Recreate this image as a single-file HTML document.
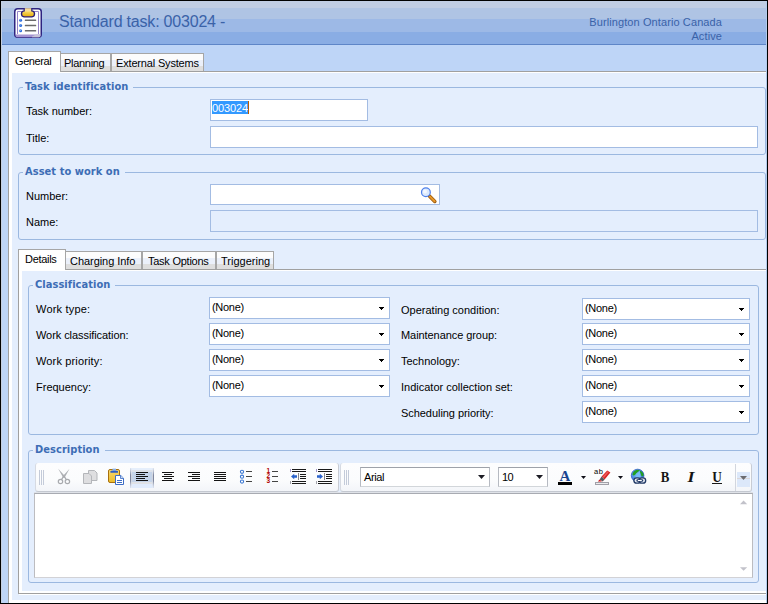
<!DOCTYPE html>
<html>
<head>
<meta charset="utf-8">
<title>Standard task: 003024</title>
<style>
html,body{margin:0;padding:0;}
body{width:768px;height:604px;overflow:hidden;position:relative;background:#bed5f7;font-family:"Liberation Sans",sans-serif;font-size:11px;color:#000;}
.abs,#root *{position:absolute;box-sizing:border-box;}
#root{position:absolute;left:0;top:0;width:768px;height:604px;overflow:hidden;}
.t{white-space:nowrap;line-height:13px;height:13px;}
/* header */
#hdr{left:0;top:0;width:768px;height:45px;background:linear-gradient(to bottom,#c0cde3 0,#c0cde3 8px,#afc4e4 8px,#afc4e4 19px,#9db9e6 19px,#9db9e6 32px,#8aade4 32px,#8aade4 44px,#5e86c8 44px,#5e86c8 45px);}
#title{left:59px;top:12px;font-size:16px;line-height:20px;height:20px;color:#3a62a8;letter-spacing:-0.2px;white-space:nowrap;}
.hr{right:46px;color:#3a62a8;text-align:right;}
/* frame */
#bt{left:0;top:0;width:768px;height:1px;background:#000;}
#bb{left:0;top:603px;width:768px;height:1px;background:#000;}
#bl{left:0;top:0;width:1px;height:604px;background:#000;}
#br{left:767px;top:0;width:1px;height:604px;background:#000;}
#bl2{left:1px;top:1px;width:1px;height:602px;background:#c5cfe0;}
#br2{left:766px;top:1px;width:1px;height:602px;background:#b4cbed;}
/* panels */
.panel{background:#fff;border:1px solid #a0a0a0;}
.panel>div{left:3px;top:1px;right:0;bottom:2px;background:#e4eefd;}
.tab{border:1px solid #a6a6a6;border-bottom:none;background:linear-gradient(to bottom,#fcfcfc 0,#fcfcfc 6px,#ebf0fa 6px,#ebf0fa 12px,#dedede 12px,#dedede 100%);}
.tab.on{background:#fff;}

fieldset,.fs{border:1px solid #9bb8e0;border-radius:3px;}
.lg{color:#3d6db5;font-family:"DejaVu Sans Condensed","Liberation Sans",sans-serif;font-weight:bold;background:#e4eefd;padding:0 5px 0 2px;letter-spacing:0.05px;}
.tb{background:linear-gradient(to bottom,#fdfdfe 0,#fbfcfd 60%,#f3f5f9 100%);border-radius:3px;border-bottom:1px solid #c4c8d0;border-left:1px solid #d6dae2;border-right:1px solid #c8ccd4;}
.dd{background:#fff;border:1px solid #b6bac2;border-top-color:#9ea2aa;border-bottom-color:#d2d6da;}
.in{border:1px solid #a3bce3;background:#fff;}
.in.dis{background:#e4eefd;}
.sel .t{left:2px;top:3px;letter-spacing:-0.3px;}
.sel i{right:5px;top:9px;width:5px;height:1px;background:#000;}
.sel i::before,.sel i::after{content:"";position:absolute;background:#000;height:1px;}
.sel i::before{left:1px;top:1px;width:3px;}
.sel i::after{left:2px;top:2px;width:1px;}
</style>
</head>
<body>
<div id="root">
<div id="hdr"></div>
<div id="title">Standard task: 003024 -</div>
<div class="t hr" style="top:16px;letter-spacing:0.1px">Burlington Ontario Canada</div>
<div class="t hr" style="top:30px;letter-spacing:0.1px">Active</div>

<!-- outer tab panel -->
<div class="panel" style="left:8px;top:71px;width:780px;height:533px"><div style="bottom:3px"></div></div>
<div class="tab on" style="left:8px;top:51px;width:53px;height:21px"><span class="t" style="left:6px;top:3px;letter-spacing:-0.4px">General</span></div>
<div class="tab" style="left:60px;top:53px;width:51px;height:18px"><span class="t" style="left:3px;top:3px;letter-spacing:-0.3px">Planning</span></div>
<div class="tab" style="left:111px;top:53px;width:93px;height:18px"><span class="t" style="left:4px;top:3px;letter-spacing:-0.17px">External Systems</span></div>

<!-- Task identification -->
<div class="fs" style="left:18px;top:87px;width:748px;height:68px"></div>
<span class="t lg" style="left:23px;top:80px">Task identification</span>
<span class="t" style="left:26px;top:105px">Task number:</span>
<div class="in" style="left:210px;top:99px;width:158px;height:22px"><span class="t" style="left:1px;top:1px;width:36px;height:13px;line-height:15px;background:#3399ff;color:#fff;letter-spacing:-0.1px">003024</span><b style="left:37px;top:1px;width:1px;height:13px;background:#b85c00"></b></div>
<span class="t" style="left:26px;top:132px">Title:</span>
<div class="in" style="left:210px;top:126px;width:548px;height:22px"></div>

<!-- Asset to work on -->
<div class="fs" style="left:18px;top:172px;width:748px;height:68px"></div>
<span class="t lg" style="left:23px;top:165px">Asset to work on</span>
<span class="t" style="left:26px;top:190px">Number:</span>
<div class="in" style="left:210px;top:184px;width:230px;height:21px"></div>
<span class="t" style="left:26px;top:216px">Name:</span>
<div class="in dis" style="left:210px;top:210px;width:548px;height:22px"></div>

<!-- inner tab panel -->
<div class="panel" style="left:18px;top:269px;width:780px;height:325px"><div></div></div>
<div style="left:19px;top:594px;width:760px;height:1px;background:#fff"></div>
<div class="tab on" style="left:18px;top:249px;width:48px;height:21px"><span class="t" style="left:6px;top:3px;letter-spacing:-0.3px">Details</span></div>
<div class="tab" style="left:65px;top:251px;width:77px;height:18px"><span class="t" style="left:4px;top:3px;letter-spacing:-0.05px">Charging Info</span></div>
<div class="tab" style="left:142px;top:251px;width:74px;height:18px"><span class="t" style="left:5px;top:3px;letter-spacing:-0.25px">Task Options</span></div>
<div class="tab" style="left:216px;top:251px;width:58px;height:18px"><span class="t" style="left:4px;top:3px">Triggering</span></div>

<!-- Classification -->
<div class="fs" style="left:28px;top:285px;width:731px;height:150px"></div>
<span class="t lg" style="left:33px;top:278px">Classification</span>
<span class="t" style="left:36px;top:303px;letter-spacing:0.2px">Work type:</span>
<span class="t" style="left:36px;top:329px;letter-spacing:-0.07px">Work classification:</span>
<span class="t" style="left:36px;top:355px;letter-spacing:0.15px">Work priority:</span>
<span class="t" style="left:36px;top:381px">Frequency:</span>
<div class="in sel" style="left:209px;top:297px;width:181px;height:22px"><span class="t">(None)</span><i></i></div>
<div class="in sel" style="left:209px;top:323px;width:181px;height:22px"><span class="t">(None)</span><i></i></div>
<div class="in sel" style="left:209px;top:349px;width:181px;height:22px"><span class="t">(None)</span><i></i></div>
<div class="in sel" style="left:209px;top:375px;width:181px;height:22px"><span class="t">(None)</span><i></i></div>
<span class="t" style="left:401px;top:304px">Operating condition:</span>
<span class="t" style="left:401px;top:329px;letter-spacing:-0.07px">Maintenance group:</span>
<span class="t" style="left:401px;top:355px">Technology:</span>
<span class="t" style="left:401px;top:381px">Indicator collection set:</span>
<span class="t" style="left:401px;top:407px;letter-spacing:-0.05px">Scheduling priority:</span>
<div class="in sel" style="left:582px;top:298px;width:168px;height:22px"><span class="t">(None)</span><i></i></div>
<div class="in sel" style="left:582px;top:323px;width:168px;height:22px"><span class="t">(None)</span><i></i></div>
<div class="in sel" style="left:582px;top:349px;width:168px;height:22px"><span class="t">(None)</span><i></i></div>
<div class="in sel" style="left:582px;top:375px;width:168px;height:22px"><span class="t">(None)</span><i></i></div>
<div class="in sel" style="left:582px;top:401px;width:168px;height:22px"><span class="t">(None)</span><i></i></div>

<!-- Description -->
<div class="fs" style="left:28px;top:450px;width:731px;height:133px"></div>
<span class="t lg" style="left:33px;top:443px">Description</span>
<div style="left:34px;top:492px;width:719px;height:1px;background:#dfe2e8"></div>
<div id="tb1" class="tb" style="left:35px;top:463px;width:304px;height:29px"></div>
<div id="tb2" class="tb" style="left:340px;top:463px;width:412px;height:29px"></div>
<div class="dd" style="left:360px;top:467px;width:130px;height:20px"><span class="t" style="left:3px;top:3px;letter-spacing:-0.4px">Arial</span></div>
<div class="dd" style="left:498px;top:467px;width:50px;height:20px"><span class="t" style="left:3px;top:3px;letter-spacing:-0.6px">10</span></div>
<div id="ed" style="left:34px;top:493px;width:719px;height:85px;background:#fff;border:1px solid #bcbcc0;border-top-color:#a8abb2;border-bottom-color:#d2d2d6"></div>


<!-- icons overlay -->
<svg id="ico" width="768" height="604" viewBox="0 0 768 604" style="left:0;top:0;">
<defs>
<linearGradient id="gclip" x1="0" y1="0" x2="0" y2="1"><stop offset="0" stop-color="#f8d860"/><stop offset="1" stop-color="#e8b010"/></linearGradient>
<linearGradient id="gpaste" x1="0" y1="0" x2="0" y2="1"><stop offset="0" stop-color="#f6d870"/><stop offset="1" stop-color="#eebc28"/></linearGradient>
<linearGradient id="gpress" gradientUnits="userSpaceOnUse" x1="0" y1="468" x2="0" y2="488"><stop offset="0" stop-color="#e6effc"/><stop offset="0.1" stop-color="#e6effc"/><stop offset="0.1" stop-color="#dfe3ea"/><stop offset="0.2" stop-color="#dfe3ea"/><stop offset="0.2" stop-color="#c5d4e9"/><stop offset="0.7" stop-color="#c5d4e9"/><stop offset="0.7" stop-color="#e0e2e6"/><stop offset="0.8" stop-color="#e0e2e6"/><stop offset="0.8" stop-color="#e0ebfc"/><stop offset="1" stop-color="#e0ebfc"/></linearGradient>
<linearGradient id="gedge" x1="0" y1="0" x2="0" y2="1"><stop offset="0" stop-color="#c8ccd8" stop-opacity="0.3"/><stop offset="0.35" stop-color="#8088a0"/><stop offset="0.65" stop-color="#8088a0"/><stop offset="1" stop-color="#c8ccd8" stop-opacity="0.3"/></linearGradient><linearGradient id="gedge2" x1="0" y1="0" x2="0" y2="1"><stop offset="0" stop-color="#e8eef8"/><stop offset="0.4" stop-color="#cfd4de"/><stop offset="0.6" stop-color="#cfd4de"/><stop offset="1" stop-color="#e8eef8"/></linearGradient>
<radialGradient id="gglobe" cx="0.4" cy="0.35" r="0.7"><stop offset="0" stop-color="#7cc4f8"/><stop offset="1" stop-color="#2c62cc"/></radialGradient>
<linearGradient id="ghandle" x1="0" y1="0" x2="1" y2="0"><stop offset="0" stop-color="#a86010"/><stop offset="0.5" stop-color="#f0a030"/><stop offset="1" stop-color="#b06810"/></linearGradient>
</defs>

<!-- header clipboard icon -->
<g id="hicon">
<rect x="14.75" y="8.75" width="26.5" height="28.5" rx="3" ry="3" fill="#fff" stroke="#2e2480" stroke-width="1.500"/>
<path d="M15.500 34.400h25v1a1.800 1.800 0 0 1-1.800 1.800h-21.400a1.800 1.800 0 0 1-1.800-1.800z" fill="#a494d2"/>
<path d="M32 36.500l4-2.100h4.500v1a1.800 1.800 0 0 1-1.800 1.800h-6.700z" fill="#c6c2d6"/>
<path d="M17.500 34v-22.500h21v22.500" fill="none" stroke="#9484c8" stroke-width="1"/>
<path d="M23.600 8.200h8.800v2.400c1.800 0.200 2.800 1.400 2.800 3.200c0 2.200-1.200 3.600-3.200 3.600h-8c-2 0-3.200-1.400-3.200-3.600c0-1.800 1-3 2.800-3.200z" fill="#2a1c78"/>
<rect x="24.800" y="8.200" width="6.400" height="4" fill="#f8dc98"/>
<rect x="22.200" y="11.600" width="11.600" height="4.600" rx="2.200" fill="url(#gclip)"/>
<circle cx="20.600" cy="20.200" r="1.500" fill="#2c6cdc"/><circle cx="20.600" cy="25.400" r="1.500" fill="#2c6cdc"/><circle cx="20.600" cy="30.800" r="1.500" fill="#2c6cdc"/>
<circle cx="20.200" cy="19.800" r="0.600" fill="#9cc4f8"/><circle cx="20.200" cy="25" r="0.600" fill="#9cc4f8"/><circle cx="20.200" cy="30.400" r="0.600" fill="#9cc4f8"/>
<rect x="24.800" y="19.500" width="11.400" height="1.500" rx="0.500" fill="#6a6a6c"/><rect x="24.800" y="24.700" width="11.400" height="1.500" rx="0.500" fill="#6a6a6c"/><rect x="24.800" y="30.100" width="11.400" height="1.500" rx="0.500" fill="#6a6a6c"/>
</g>

<!-- magnifier -->
<g id="mag">
<path d="M429.600 196.200l5.200 5.200" stroke="#9a5a10" stroke-width="3.600" stroke-linecap="round"/>
<path d="M430 196.600l4.600 4.600" stroke="#e89828" stroke-width="2" stroke-linecap="round"/>
<circle cx="425.900" cy="192.200" r="4.400" fill="#dceafe" stroke="#4f80ea" stroke-width="1.200"/>
<circle cx="425" cy="191.400" r="2" fill="#f4f8ff"/>
</g>

<!-- toolbar grips -->
<g fill="#c4cbd9">
<rect x="39" y="470" width="1" height="15"/><rect x="41" y="470" width="1" height="15"/><rect x="43" y="470" width="1" height="15"/>
<rect x="344" y="470" width="1" height="15"/><rect x="346" y="470" width="1" height="15"/><rect x="348" y="470" width="1" height="15"/>
</g>

<!-- scissors (disabled) -->
<g fill="#aeb0b4">
<path d="M58.200 468.800l6.900 7.400-1.700 1.700z"/><path d="M69.600 468.800l-6.900 7.400 1.700 1.700z"/>
</g>
<g fill="none" stroke="#a8aaae" stroke-width="1.200" stroke-linecap="round">
<path d="M63.300 476.800l-1.700 2.600"/><path d="M64.500 476.800l1.700 2.600"/>
<ellipse cx="60.500" cy="481.500" rx="2.200" ry="2.100"/><ellipse cx="67.400" cy="481.500" rx="2.200" ry="2.100"/>
</g>
<!-- copy (disabled) -->
<g fill="#dedee0" stroke="#b4b6ba" stroke-width="1">
<path d="M88.500 470.500h6l2.500 2.500v7.500h-8.500z"/>
<path d="M83.500 473.500h5.500l2.500 2.500v7.500h-8z"/>
</g>
<!-- paste -->
<g>
<rect x="108.500" y="469.500" width="11" height="13" rx="1.500" fill="url(#gpaste)" stroke="#a8700c" stroke-width="1"/>
<rect x="112.500" y="468.600" width="3.500" height="2.400" fill="#8cb4ec"/>
<rect x="110.400" y="470.800" width="7.600" height="2" rx="0.600" fill="#2c5cc0"/>
<path d="M115.500 475.500h5.300l2.700 2.700v6.300h-8z" fill="#fff" stroke="#3c6cc4" stroke-width="1"/>
<path d="M120.500 475.500v3h3" fill="#c8daf4" stroke="#3c6cc4" stroke-width="0.800"/>
<rect x="117" y="480" width="5" height="1" fill="#3c6cc4"/><rect x="117" y="482" width="5" height="1" fill="#3c6cc4"/>
</g>
<!-- pressed align-left -->
<rect x="130" y="468" width="24" height="20" fill="url(#gpress)"/>
<rect x="131" y="468" width="1" height="20" fill="url(#gedge2)"/><rect x="152" y="468" width="1" height="20" fill="url(#gedge2)"/>
<rect x="130" y="468" width="1" height="20" fill="url(#gedge)"/><rect x="153" y="468" width="1" height="20" fill="url(#gedge)"/>
<g fill="#141414">
<!-- left -->
<rect x="136" y="472" width="12" height="1"/><rect x="136" y="474" width="9" height="1"/><rect x="136" y="476" width="12" height="1"/><rect x="136" y="478" width="9" height="1"/><rect x="136" y="480" width="12" height="1"/>
<!-- center -->
<rect x="162" y="472" width="12" height="1"/><rect x="164" y="474" width="8" height="1"/><rect x="162" y="476" width="12" height="1"/><rect x="164" y="478" width="8" height="1"/><rect x="162" y="480" width="12" height="1"/>
<!-- right -->
<rect x="188" y="472" width="12" height="1"/><rect x="192" y="474" width="8" height="1"/><rect x="188" y="476" width="12" height="1"/><rect x="192" y="478" width="8" height="1"/><rect x="188" y="480" width="12" height="1"/>
<!-- justify -->
<rect x="214" y="472" width="12" height="1"/><rect x="214" y="474" width="12" height="1"/><rect x="214" y="476" width="12" height="1"/><rect x="214" y="478" width="12" height="1"/><rect x="214" y="480" width="12" height="1"/>
</g>
<!-- bullets -->
<g fill="#fff" stroke="#3c78d2" stroke-width="1.100">
<circle cx="242" cy="471.800" r="1.600"/><circle cx="242" cy="476.700" r="1.600"/><circle cx="242" cy="481.600" r="1.600"/>
</g>
<g fill="#444">
<rect x="246" y="471" width="6" height="1"/><rect x="246" y="476" width="6" height="1"/><rect x="246" y="481" width="6" height="1"/>
<rect x="272" y="471" width="6" height="1"/><rect x="272" y="476" width="6" height="1"/><rect x="272" y="481" width="6" height="1"/>
</g>
<g font-family="Liberation Sans, sans-serif" font-weight="bold" font-size="6.500px" fill="#b00000">
<text x="266.600" y="473">1</text><text x="266.600" y="478">2</text><text x="266.600" y="483.200">3</text>
</g>
<!-- outdent -->
<g fill="#1a1a1a">
<rect x="292" y="469" width="14" height="1"/><rect x="292" y="471" width="14" height="1"/><rect x="292" y="481" width="14" height="1"/><rect x="292" y="483" width="14" height="1"/>
<rect x="300" y="474" width="6" height="1"/><rect x="300" y="476" width="6" height="1"/><rect x="300" y="478" width="6" height="1"/>
<rect x="318" y="469" width="14" height="1"/><rect x="318" y="471" width="14" height="1"/><rect x="318" y="481" width="14" height="1"/><rect x="318" y="483" width="14" height="1"/>
<rect x="326" y="474" width="6" height="1"/><rect x="326" y="476" width="6" height="1"/><rect x="326" y="478" width="6" height="1"/>
</g>
<rect x="290" y="469" width="1" height="3" fill="#a496cc"/><rect x="290" y="481" width="1" height="3" fill="#a4a4ac"/>
<rect x="316" y="469" width="1" height="3" fill="#a496cc"/><rect x="316" y="481" width="1" height="3" fill="#a4a4ac"/>
<rect x="298" y="473" width="1" height="7" fill="#84848c"/><rect x="324" y="473" width="1" height="7" fill="#84848c"/>
<path d="M291 476.500l3.200-2.800v1.600h2.800v2.400h-2.800v1.600z" fill="#2a62cc"/>
<path d="M323 476.500l-3.200-2.800v1.600h-2.800v2.400h2.800v1.600z" fill="#2a62cc"/>

<path d="M478 475h7l-3.500 4z" fill="#1c1c24"/><path d="M536 475h7l-3.500 4z" fill="#1c1c24"/>
<!-- font colour -->
<text x="559.600" y="480.800" font-family="Liberation Serif, serif" font-weight="bold" font-size="15px" fill="#1a4590">A</text>
<rect x="558" y="482" width="14" height="3" fill="#000"/>
<path d="M581 476h5l-2.500 3z" fill="#101018"/>
<!-- highlight -->
<text x="594" y="474.400" font-family="Liberation Sans, sans-serif" font-size="7.500px" letter-spacing="0.500px" fill="#000">ab</text>
<path d="M607.200 470.600l3.200 2-5.800 6.800-3-2.800z" fill="#d62222"/>
<path d="M607.600 471.200l1.200 0.800-5 6-1.200-1.200z" fill="#ec5a5a"/>
<path d="M601.600 476.600l3 2.800-2 2.200-3-2.200z" fill="#58585e"/>
<path d="M599.600 479.400l2.400 2.200h-4.200z" fill="#d01818"/>
<rect x="595.500" y="482.500" width="13" height="2" fill="#ececee" stroke="#a0a0a8" stroke-width="1"/>
<path d="M618 476h5l-2.500 3z" fill="#101018"/>
<!-- globe link -->
<circle cx="637.600" cy="475.500" r="6.300" fill="url(#gglobe)" stroke="#2e5cc8" stroke-width="0.800"/>
<path d="M632.400 474.600c0.400-2.600 2.400-4.400 5-4.800c1.200 0 2 0.400 2.400 1c-2 0.600-3.200 2.400-4.600 4c-1 1-2 1.200-2.800-0.200z" fill="#22a022"/>
<path d="M639.800 470.600c1.800 0.600 3.400 2.200 3.900 4.400c-0.400 1.600-1.700 1.600-2.500 0.400c-0.600-1.600-1.200-3-1.400-4.800z" fill="#22a022"/>
<path d="M634.800 477.800l4.800-7l1.400 7z" fill="#78bcf8"/>
<rect x="633.900" y="477.800" width="6.600" height="5.400" rx="2.700" fill="#dfe5f0" stroke="#223a66" stroke-width="1.300"/>
<rect x="639.100" y="477.800" width="6.600" height="5.400" rx="2.700" fill="#dfe5f0" stroke="#223a66" stroke-width="1.300"/>
<rect x="636.400" y="479.300" width="6.800" height="2.400" rx="1.200" fill="#223a66"/>
<rect x="637.800" y="480" width="4" height="1" fill="#fff"/>
<!-- B I U -->
<g font-family="Liberation Serif, serif" font-weight="bold" font-size="14.500px" fill="#141414">
<text x="660.700" y="481.900" textLength="8.600" lengthAdjust="spacingAndGlyphs">B</text>
<text x="687.400" y="481.900" font-style="italic" textLength="7" lengthAdjust="spacingAndGlyphs">I</text>
<text x="712.200" y="481.900" textLength="9.600" lengthAdjust="spacingAndGlyphs">U</text>
</g>
<rect x="712" y="483" width="10" height="1" fill="#181818"/>
<!-- overflow -->
<rect x="737" y="472" width="13" height="15" fill="#dce8fa"/>
<rect x="737" y="478" width="13" height="1" fill="#dad6d8"/>
<path d="M740 476h7l-3.500 4z" fill="#6c6c70"/>
<rect x="735" y="464" width="1" height="27" fill="#d2d6de"/>
<!-- scroll arrows -->
<path d="M740 504.200h7.200l-3.600-3.600z" fill="#c2c2ca"/>
<path d="M740 567.200h7.200l-3.600 3.600z" fill="#c2c2ca"/>
</svg>

<!-- window frame -->
<div id="bl2"></div><div id="br2"></div>
<div id="bt"></div><div id="bb"></div><div id="bl"></div><div id="br"></div>
</div>
</body>
</html>
